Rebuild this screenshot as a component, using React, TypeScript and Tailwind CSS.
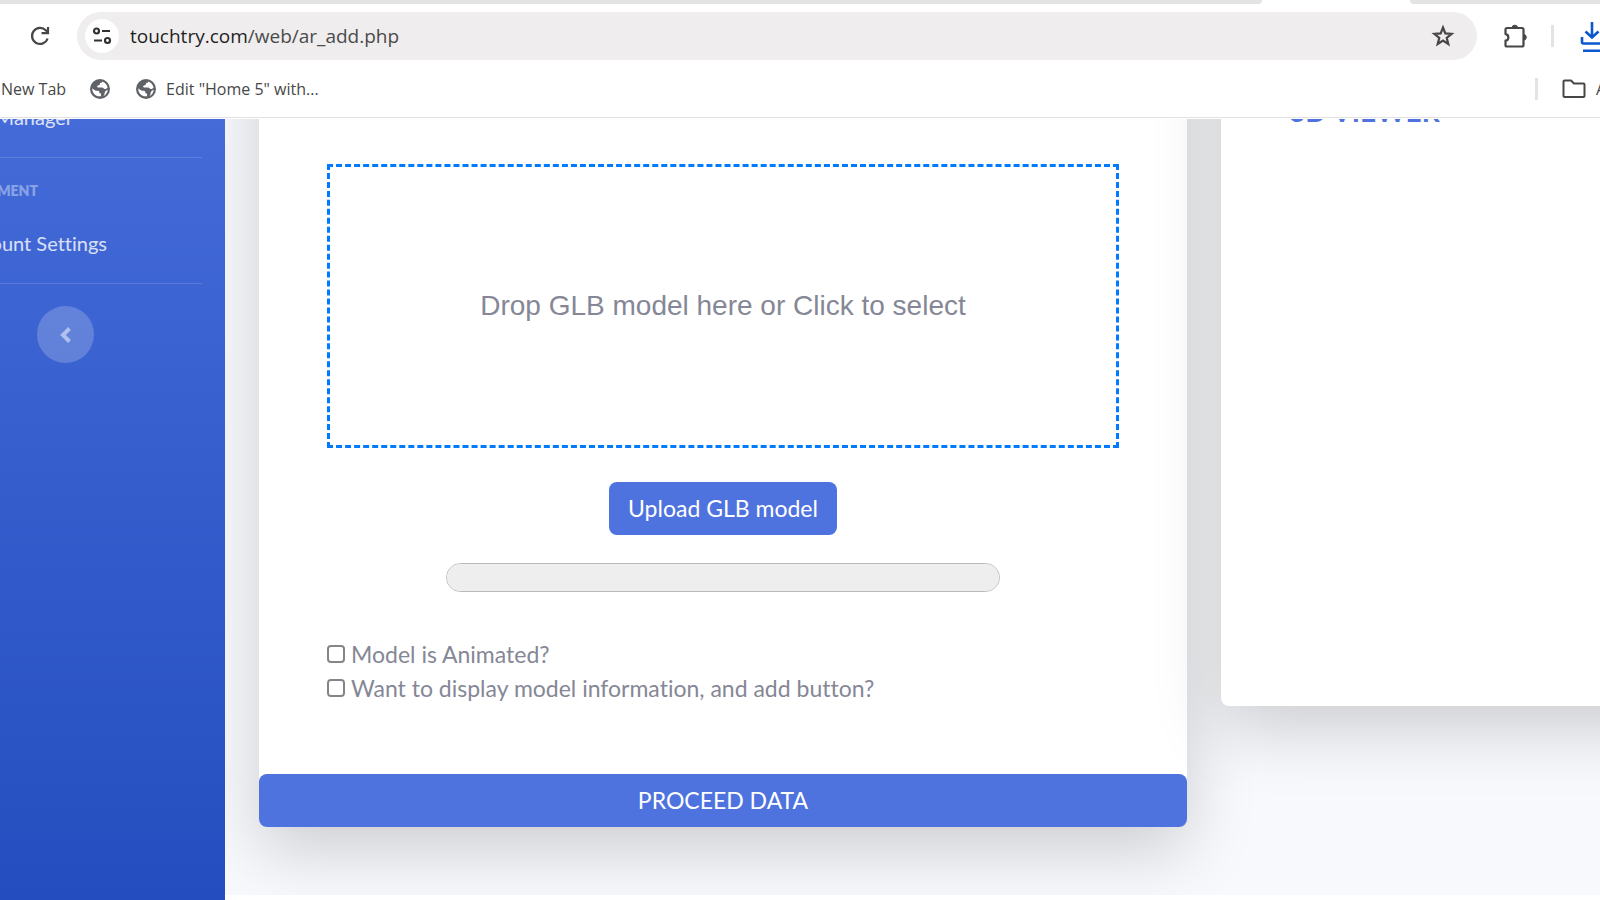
import React from "react";

function GlobeIcon() {
  return (
    <svg viewBox="0 0 20 20" className="size-5 shrink-0" aria-hidden="true">
      <circle cx="10" cy="10" r="10" fill="#5f6368" />
      <path d="M2.300 9.200c1.300 1.500 3 2.600 5.200 2.600 1.300 0 1.800.6 1.800 1.500 0 1.100.9 1.300 1.700 1.300v2.600c-5 .7-9-3-8.700-8z" fill="#fff" />
      <path d="M12.200 2.500c2.800.9 4.800 3 5.400 6-.8 1-1.800 1.600-2.800 1.500-1.300-.1-1.300-1.500-2.600-1.500H8.300c-1.400 0-1.600-1.600-.3-2 1.200-.3 1.800-.4 1.900-1.400.1-.9.600-1.200 1.300-1.300.7-.1 1-.600 1-1.300z" fill="#fff" />
      <path d="M17.700 10.500c-.2 3-1.800 5.400-4.200 6.500.8-1.300 1.200-2.300 1.300-3.600.1-1.300 1.500-1.600 2.900-2.900z" fill="#fff" />
    </svg>
  );
}

function Browser() {
  return (
    <header className="relative flex h-[119px] shrink-0 flex-col bg-white font-['Open_Sans','Noto_Sans',sans-serif]">
      <div className="flex h-1 shrink-0">
        <div className="flex-1 rounded-br-lg bg-[#e3e3e3]" />
        <div className="w-[148px]" />
        <div className="w-[190px] rounded-bl-lg bg-[#e3e3e3]" />
      </div>
      <div className="flex h-16 shrink-0 items-center overflow-hidden pl-[29px]">
        <button aria-label="Reload" className="flex size-[22px] items-center justify-center">
          <svg viewBox="0 0 22 22" className="size-[22px]" fill="none" stroke="#474747" strokeWidth="2.200">
            <path d="M18.600 13.500A8 8 0 1 1 17 5.600L19 7.600" />
            <path d="M19 2v6.200h-6.500" />
          </svg>
        </button>
        <div className="ml-[26px] flex h-12 flex-1 items-center rounded-full bg-[#efedee] pr-[22px] pl-2">
          <button aria-label="View site information" className="flex size-[34px] shrink-0 items-center justify-center rounded-full bg-white">
            <svg viewBox="0 0 20 20" className="size-5" fill="none" stroke="#303030" strokeWidth="2.200">
              <circle cx="4.500" cy="5" r="2.500" />
              <path d="M10 5h8M2 14.500h8" />
              <circle cx="15.500" cy="14.500" r="2.500" />
            </svg>
          </button>
          <p className="ml-[11px] flex-1 text-[19px] leading-7 text-[#4a4a4a]">
            <span className="text-[#1f1f1f]">touchtry.com</span>/web/ar_add.php
          </p>
          <button aria-label="Bookmark this tab">
            <svg viewBox="0 0 24 24" className="size-6" fill="none" stroke="#474747" strokeWidth="2.200">
              <path d="M12 3.500l2.300 5.900 6.300.4-4.900 4 1.600 6.200-5.300-3.400-5.300 3.400 1.600-6.200-4.900-4 6.300-.4z" />
            </svg>
          </button>
        </div>
        <button aria-label="Extensions" className="ml-[26px]">
          <svg viewBox="0 0 26 26" className="size-[26px]" fill="none" stroke="#474747" strokeWidth="2.200" strokeLinejoin="round">
            <path d="M4 5h15a1.500 1.500 0 0 1 1.500 1.500V22a1.500 1.500 0 0 1-1.500 1.500H4A1.500 1.500 0 0 1 2.500 22v-4.300c3.800-.4 3.800-6.200 0-6.600V6.500A1.500 1.500 0 0 1 4 5z" />
            <path d="M9 5a2.800 2.800 0 0 1 5.600 0zM20.500 11.500a2.800 2.800 0 0 1 0 5.600z" fill="#474747" strokeWidth="1" />
          </svg>
        </button>
        <div className="ml-[22px] h-[22px] w-[3px] bg-[#e3e3e3]" />
        <button aria-label="Downloads" className="-mr-1 ml-[26px]">
          <svg viewBox="0 0 24 32" className="h-8 w-6" fill="none" stroke="#0b57d0" strokeWidth="2.600">
            <path d="M12 2v15M5.500 11.500l6.500 6 6.500-6M2 17v5q0 1.500 1.500 1.500h17q1.500 0 1.500-1.500v-5M3 30.700h20" />
          </svg>
        </button>
      </div>
      <nav aria-label="Bookmarks" className="mt-px flex h-10 items-center overflow-hidden text-[16px] leading-6 text-[#474747]">
        <a href="#new-tab" className="ml-px">New Tab</a>
        <a href="#site" aria-label="Website" className="ml-6"><GlobeIcon /></a>
        <a href="#home" className="ml-[26px] flex items-center gap-[10px]"><GlobeIcon />Edit "Home 5" with...</a>
        <div className="ml-auto h-[22px] w-[3px] bg-[#e3e3e3]" />
        <a href="#all" className="ml-6 flex w-[38px] shrink-0 items-center gap-[10px] whitespace-nowrap">
          <svg viewBox="0 0 24 20" className="h-5 w-6 shrink-0" fill="none" stroke="#474747" strokeWidth="2" strokeLinejoin="round">
            <path d="M2.500 1.500h6.500l3 3h9.500q1 0 1 1V17q0 1-1 1h-19q-1 0-1-1V2.500q0-1 1-1z" />
          </svg>
          All Bookmarks
        </a>
      </nav>
      <div className="mt-2 h-px shrink-0 bg-[#e2e2e4]" />
    </header>
  );
}

function Sidebar() {
  return (
    <aside className="flex w-[225px] shrink-0 flex-col overflow-hidden bg-linear-to-b from-[#446bd8] to-[#244dbf] text-[20px] leading-7 text-white/80">
      <a href="#manager" className="-mt-4 flex w-[73px] justify-end whitespace-nowrap">Manager</a>
      <hr className="mt-[26px] mr-[23px] border-white/15" />
      <h2 className="mt-[23px] flex h-5 w-[38px] items-center justify-end text-[14px] font-extrabold text-white/40">MENT</h2>
      <a href="#account" className="mt-7 flex w-[107px] justify-end whitespace-nowrap">Account Settings</a>
      <hr className="mt-[26px] mr-[23px] border-white/15" />
      <button aria-label="Collapse sidebar" className="mt-[22px] ml-[37px] flex size-[57px] items-center justify-center rounded-full bg-white/20">
        <svg viewBox="0 0 12 16" className="h-4 w-3" fill="none" stroke="#fff" strokeOpacity="0.5" strokeWidth="4">
          <path d="M9.500 1.500L3 8l6.500 6.500" />
        </svg>
      </button>
    </aside>
  );
}

function Check({ id, label }: { id: string; label: string }) {
  return (
    <div className="flex h-[34px] items-center gap-[6px]">
      <input id={id} type="checkbox" className="size-[18px] appearance-none rounded-[4px] border-2 border-[#858585] bg-white" />
      <label htmlFor={id}>{label}</label>
    </div>
  );
}

export default function App() {
  return (
    <div className="flex min-h-screen flex-col overflow-hidden bg-white font-['Lato','Noto_Sans',sans-serif] text-[23px] leading-[34px] text-[#858796] [font-variant-ligatures:none]">
      <Browser />
      <div className="flex flex-1 overflow-hidden">
        <Sidebar />
        <div className="flex min-w-0 flex-1 flex-col">
          <main className="flex flex-1 items-start gap-[34px] overflow-hidden bg-[#f8f9fc] pb-[68px] pl-[34px]">
            <section className="-mt-[120px] flex min-w-0 flex-1 flex-col rounded-b-lg bg-white pt-[120px] shadow-[0_23px_68px_rgba(0,0,0,0.175)]">
              <form className="flex flex-col px-[68px] pt-[45px] pb-[69px]" onSubmit={(e) => e.preventDefault()}>
                <button type="button" className="flex h-[284px] items-center justify-center border-3 border-dashed border-[#007bff] font-['Liberation_Sans',Arial,sans-serif] text-[28px]">
                  Drop GLB model here or Click to select
                </button>
                <button type="button" className="mt-[34px] flex h-[53px] items-center self-center rounded-lg bg-[#4e73df] px-[19px] pb-0.5 text-white">
                  Upload GLB model
                </button>
                <progress
                  aria-label="Upload progress"
                  value={0}
                  max={100}
                  className="mt-7 h-[29px] w-[70%] appearance-none self-center overflow-hidden rounded-full border border-[#b9b9b9] bg-[#eeeeee] [&::-webkit-progress-bar]:bg-[#eeeeee]"
                />
                <div className="mt-[45px]">
                  <Check id="animated" label="Model is Animated?" />
                  <Check id="info" label="Want to display model information, and add button?" />
                </div>
              </form>
              <button type="button" className="h-[53px] rounded-lg bg-[#4e73df] pb-0.5 text-white">PROCEED DATA</button>
            </section>
            <section className="-mt-[120px] -mr-[550px] h-[707px] w-[929px] shrink-0 rounded-b-lg bg-white px-[68px] pt-[95px] shadow-[0_23px_68px_rgba(0,0,0,0.175)]">
              <h1 className="text-[28px] font-bold text-[#4e73df]">3D VIEWER</h1>
            </section>
          </main>
          <footer className="h-[5px] bg-white" />
        </div>
      </div>
    </div>
  );
}
